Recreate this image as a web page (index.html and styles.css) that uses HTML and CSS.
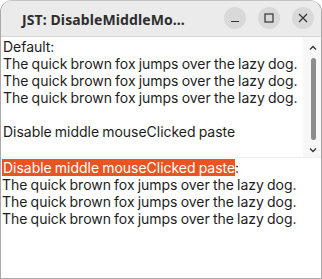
FILE: index.html
```html
<!DOCTYPE html>
<html>
<head>
<meta charset="utf-8">
<link rel="stylesheet" href="styles.css">
</head>
<body>
<div class="window">
  <div class="titlebar">
    <div class="title">JST: DisableMiddleMo...</div>
    <div class="controls">
      <div class="btn"><svg width="10" height="10" viewBox="0 0 10 10"><path d="M1 8.5H9" stroke="#333" stroke-width="1.2"/></svg></div>
      <div class="btn"><svg width="10" height="10" viewBox="0 0 10 10"><rect x="1" y="1" width="8" height="8" fill="none" stroke="#333" stroke-width="1.2"/></svg></div>
      <div class="btn"><svg width="10" height="10" viewBox="0 0 10 10"><path d="M1 1L9 9M9 1L1 9" stroke="#333" stroke-width="1.2"/></svg></div>
    </div>
  </div>
  <div class="upper">
    <div class="text upper-text">
      <div class="line">Default:</div>
      <div class="line">The quick brown fox jumps over the lazy dog.</div>
      <div class="line">The quick brown fox jumps over the lazy dog.</div>
      <div class="line">The quick brown fox jumps over the lazy dog.</div>
      <div class="line">&nbsp;</div>
      <div class="line">Disable middle mouseClicked paste</div>
    </div>
    <div class="scrollbar">
      <svg class="arrow" width="8" height="6" viewBox="0 0 8 6"><path d="M1 4.5L4 1.5L7 4.5" fill="none" stroke="#333" stroke-width="1.3"/></svg>
      <div class="track"><div class="thumb"></div></div>
      <svg class="arrow" width="8" height="6" viewBox="0 0 8 6"><path d="M1 1.5L4 4.5L7 1.5" fill="none" stroke="#333" stroke-width="1.3"/></svg>
    </div>
  </div>
  <div class="text lower-text">
    <div class="line"><span class="sel">Disable middle mouseClicked paste</span>:</div>
    <div class="line">The quick brown fox jumps over the lazy dog.</div>
    <div class="line">The quick brown fox jumps over the lazy dog.</div>
    <div class="line">The quick brown fox jumps over the lazy dog.</div>
  </div>
</div>
</body>
</html>
```
FILE: styles.css
```css
html, body {
  margin: 0;
  padding: 0;
  background: #ffffff;
}
.window {
  width: 322px;
  height: 279px;
  box-sizing: border-box;
  border: 1px solid #a9a9a9;
  border-top-color: #c4c4c4;
  border-radius: 12px 12px 0 0;
  overflow: hidden;
  display: flex;
  flex-direction: column;
  background: #ffffff;
  font-family: "Noto Sans", "DejaVu Sans", sans-serif;
}
.titlebar {
  height: 35px;
  flex: none;
  background: #ebebeb;
  border-bottom: 1px solid #d6d6d6;
  display: flex;
  align-items: center;
  justify-content: space-between;
  padding: 0 7px 0 21px;
}
.title {
  font-family: "Noto Sans", sans-serif;
  font-weight: 700;
  font-size: 14px;
  letter-spacing: 0.1px;
  color: #2e2e2e;
  padding-top: 1px;
}
.controls {
  display: flex;
  gap: 12px;
  margin-bottom: 1px;
}
.btn {
  width: 22px;
  height: 22px;
  border-radius: 50%;
  background: #d9d9d9;
  display: flex;
  align-items: center;
  justify-content: center;
}
.upper {
  height: 120px;
  flex: none;
  display: flex;
  border-bottom: 1px solid #f0f0f0;
}
.text {
  font-family: "Inter", "Noto Sans", sans-serif;
  font-size: 14px;
  line-height: 17px;
  letter-spacing: -0.03px;
  word-spacing: -0.7px;
  color: #1d1d1d;
  white-space: nowrap;
}
.upper-text {
  flex: 1;
  padding: 1px 0 0 2px;
  overflow: hidden;
}
.scrollbar {
  width: 18px;
  flex: none;
  background: #f7f7f7;
  display: flex;
  flex-direction: column;
  align-items: center;
  padding: 8px 0 4px;
  box-sizing: border-box;
}
.arrow {
  flex: none;
  margin-left: 2px;
}
.track {
  flex: 1;
  padding: 7px 0 7px;
  display: flex;
  margin-left: 2px;
}
.thumb {
  width: 5px;
  flex: 1;
  border-radius: 3px;
  background: #8c8c8c;
}
.lower-text {
  padding: 1px 0 0 1px;
}
.sel {
  background: #e95420;
  color: #ffffff;
  padding-left: 1px;
}
```
